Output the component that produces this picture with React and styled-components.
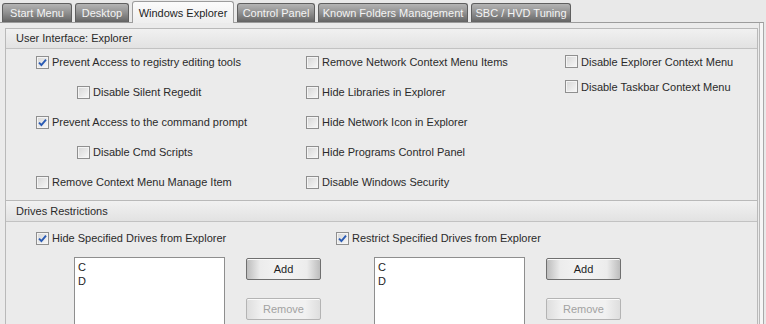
import React from "react";
import styled, { createGlobalStyle } from "styled-components";

const GlobalStyle = createGlobalStyle`
  body {
    margin: 0;
    background: #e9e9e9;
    font-family: "Liberation Sans", Arial, sans-serif;
    font-size: 11px;
    color: #1e1e1e;
  }
`;

const tabs = [
  { label: "Start Menu", w: 70 },
  { label: "Desktop", w: 54 },
  { label: "Windows Explorer", w: 102, active: true },
  { label: "Control Panel", w: 78 },
  { label: "Known Folders Management", w: 150 },
  { label: "SBC / HVD Tuning", w: 100 },
];

export default function App() {
  return (
    <Window>
      <GlobalStyle />
      <TabBar>
        {tabs.map((t) => (
          <Tab key={t.label} $active={t.active} $w={t.w}>
            {t.label}
          </Tab>
        ))}
      </TabBar>
      <Panel>
        <Group>
          <GroupHeader $h={19}>User Interface: Explorer</GroupHeader>
          <OptionGrid>
            <Column $w={270} $shift={-2}>
              <Row $h={30}>
                <Check checked label="Prevent Access to registry editing tools" />
              </Row>
              <Row $h={30} $indent={41}>
                <Check label="Disable Silent Regedit" />
              </Row>
              <Row $h={30}>
                <Check checked label="Prevent Access to the command prompt" />
              </Row>
              <Row $h={30} $indent={41}>
                <Check label="Disable Cmd Scripts" />
              </Row>
              <Row $h={30}>
                <Check label="Remove Context Menu Manage Item" />
              </Row>
            </Column>
            <Column $w={259} $shift={-2}>
              <Row $h={30}>
                <Check label="Remove Network Context Menu Items" />
              </Row>
              <Row $h={30}>
                <Check label="Hide Libraries in Explorer" />
              </Row>
              <Row $h={30}>
                <Check label="Hide Network Icon in Explorer" />
              </Row>
              <Row $h={30}>
                <Check label="Hide Programs Control Panel" />
              </Row>
              <Row $h={30}>
                <Check label="Disable Windows Security" />
              </Row>
            </Column>
            <Column>
              <Row $h={25}>
                <Check label="Disable Explorer Context Menu" />
              </Row>
              <Row $h={25}>
                <Check label="Disable Taskbar Context Menu" />
              </Row>
            </Column>
          </OptionGrid>
        </Group>
        <Group $last>
          <GroupHeader $h={20}>Drives Restrictions</GroupHeader>
          <DrivesGrid>
            <DriveColumn
              label="Hide Specified Drives from Explorer"
              items={["C", "D"]}
            />
            <DriveColumn
              label="Restrict Specified Drives from Explorer"
              items={["C", "D"]}
            />
          </DrivesGrid>
        </Group>
      </Panel>
    </Window>
  );
}

function DriveColumn({ label, items }) {
  return (
    <DriveCol>
      <Row $h={18}>
        <Check checked label={label} />
      </Row>
      <DriveBody>
        <ListBox>
          {items.map((i) => (
            <ListItem key={i}>{i}</ListItem>
          ))}
        </ListBox>
        <Buttons>
          <Button>Add</Button>
          <Button disabled>Remove</Button>
        </Buttons>
      </DriveBody>
    </DriveCol>
  );
}

function Check({ checked, label }) {
  return (
    <CheckLabel>
      <Box>
        {checked && (
          <svg width="9" height="9" viewBox="0 0 9 9">
            <path
              d="M1 4.6 L3.4 7 L8 1.6"
              fill="none"
              stroke="#2a5bb4"
              strokeWidth="1.9"
            />
          </svg>
        )}
      </Box>
      {label}
    </CheckLabel>
  );
}

const Window = styled.div`
  width: 766px;
  height: 324px;
  overflow: hidden;
`;

const TabBar = styled.div`
  display: flex;
  align-items: flex-end;
  gap: 3px;
  height: 22px;
  padding-left: 2px;
`;

const Tab = styled.div`
  box-sizing: border-box;
  width: ${(p) => p.$w}px;
  height: ${(p) => (p.$active ? 22 : 19)}px;
  display: flex;
  align-items: center;
  justify-content: center;
  white-space: nowrap;
  border: 1px solid ${(p) => (p.$active ? "#9c9c9c" : "#5f5f5f")};
  border-bottom: none;
  border-radius: 3px 3px 0 0;
  color: ${(p) => (p.$active ? "#1e1e1e" : "#f4f4f4")};
  background: ${(p) =>
    p.$active
      ? "linear-gradient(#fbfbfb, #eeeeee)"
      : "linear-gradient(#b4b4b4, #939393 45%, #767676 80%, #636363)"};
  margin-bottom: ${(p) => (p.$active ? "-1px" : "0")};
  position: relative;
`;

const Panel = styled.div`
  box-sizing: border-box;
  width: 764px;
  height: 302px;
  padding: 5px 4px 0 5px;
  border-top: 1px solid #9c9c9c;
  border-right: 1px solid #a8a8a8;
  background: #ebebeb;
  box-shadow: inset -3px 0 0 #f6f6f6, inset -4px 0 0 #b8b8b8;
`;

const Group = styled.div`
  box-sizing: border-box;
  width: 753px;
  border: 1px solid #b9b9b9;
  border-bottom: ${(p) => (p.$last ? "1px solid #b9b9b9" : "none")};
  height: ${(p) => (p.$last ? "140px" : "172px")};
`;

const GroupHeader = styled.div`
  height: ${(p) => p.$h}px;
  line-height: ${(p) => p.$h}px;
  padding-left: 10px;
  border-bottom: 1px solid #c2c2c2;
  background: linear-gradient(#f1f1f1, #e2e2e2);
  color: #2a2a2a;
`;

const OptionGrid = styled.div`
  display: flex;
  padding-left: 30px;
`;

const Column = styled.div`
  display: flex;
  flex-direction: column;
  width: ${(p) => (p.$w ? `${p.$w}px` : "auto")};
  margin-top: ${(p) => p.$shift || 0}px;
`;

const Row = styled.div`
  height: ${(p) => p.$h}px;
  display: flex;
  align-items: center;
  padding-left: ${(p) => p.$indent || 0}px;
`;

const CheckLabel = styled.label`
  display: flex;
  align-items: center;
  gap: 3px;
  white-space: nowrap;
  color: #2a2a2a;
`;

const Box = styled.span`
  box-sizing: border-box;
  width: 13px;
  height: 13px;
  border: 1px solid #8f8f8f;
  background: linear-gradient(135deg, #d6d6d6, #f8f8f8);
  box-shadow: inset 0 0 0 1px #f4f4f4;
  display: flex;
  align-items: center;
  justify-content: center;
`;

const DrivesGrid = styled.div`
  display: flex;
  padding: 7px 0 0 30px;
`;

const DriveCol = styled.div`
  width: 300px;
  display: flex;
  flex-direction: column;
`;

const DriveBody = styled.div`
  display: flex;
  gap: 21px;
  padding: 10px 0 0 38px;
`;

const ListBox = styled.div`
  box-sizing: border-box;
  width: 151px;
  height: 90px;
  background: #ffffff;
  border: 1px solid #8e8e8e;
  padding: 2px 0 0 3px;
`;

const ListItem = styled.div`
  height: 14px;
  line-height: 14px;
  color: #1e1e1e;
`;

const Buttons = styled.div`
  display: flex;
  flex-direction: column;
  gap: 18px;
  padding-top: 1px;
`;

const Button = styled.button`
  box-sizing: border-box;
  width: 75px;
  height: 22px;
  font-family: inherit;
  font-size: 11px;
  padding: 0;
  border-radius: 2px;
  border: 1px solid ${(p) => (p.disabled ? "#b4b4b4" : "#6f6f6f")};
  color: ${(p) => (p.disabled ? "#a2a2a2" : "#1e1e1e")};
  background: ${(p) =>
    p.disabled
      ? "linear-gradient(90deg, #dedede, #f1f1f1 20%, #f1f1f1 80%, #dedede)"
      : "linear-gradient(90deg, #bdbdbd, #ececec 18%, #f4f4f4 50%, #ececec 82%, #bdbdbd)"};
  box-shadow: inset 0 1px 0 #fafafa;
`;
